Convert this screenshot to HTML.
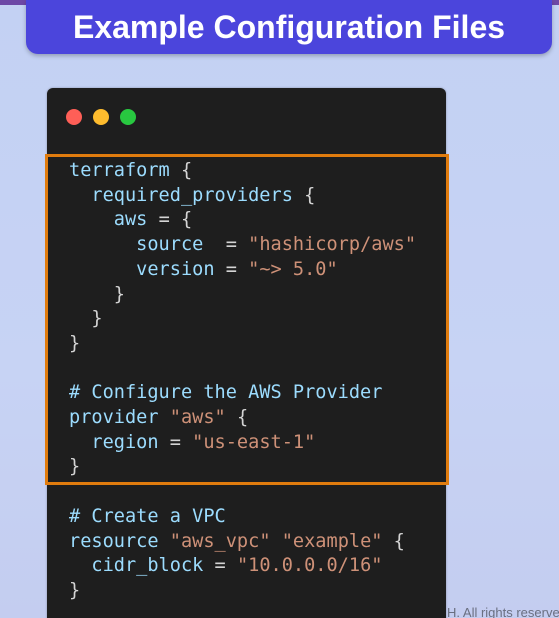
<!DOCTYPE html>
<html><head><style>
html,body{margin:0;padding:0;width:559px;height:618px;overflow:hidden;}
body{background:linear-gradient(180deg,#c3d1f3 0%,#c7d3f4 60%,#c4cdf0 100%);position:relative;font-family:"Liberation Sans",sans-serif;}
.top{position:absolute;left:0;top:0;width:559px;height:5px;background:#6d48a6;}
.title{position:absolute;left:26px;top:0;width:526px;height:54px;background:#4b45dc;border-radius:0 0 12px 12px;box-shadow:0 2px 4px rgba(0,0,0,.25);color:#fff;font-weight:bold;font-size:32px;text-align:center;line-height:54px;}
.win{position:absolute;left:47px;top:88px;width:399px;height:540px;background:#1e1e1e;border-radius:6px;box-shadow:0 0 2px rgba(0,0,0,.3);}
.dot{position:absolute;top:109px;width:16px;height:16px;border-radius:50%;}
.box{position:absolute;left:45px;top:154px;width:398px;height:325px;border:3px solid #e07c0e;}
pre{position:absolute;left:69px;top:159px;margin:0;font-family:"DejaVu Sans Mono","Liberation Mono",monospace;font-size:18.6px;line-height:24.7px;color:#d4d4d4;}
.k{color:#9cdcfe}.s{color:#ce9178}
.foot{position:absolute;left:447px;top:605px;font-size:13px;color:#6a6f80;white-space:nowrap;}
</style></head><body>
<div class="top"></div>
<div class="title">Example Configuration Files</div>
<div class="win"></div>
<div class="dot" style="left:66px;background:#fe5f57"></div>
<div class="dot" style="left:93px;background:#febc2e"></div>
<div class="dot" style="left:120px;background:#28c840"></div>
<div class="box"></div>
<pre><span class="k">terraform</span> {
  <span class="k">required_providers</span> {
    <span class="k">aws</span> = {
      <span class="k">source</span>  = <span class="s">"hashicorp/aws"</span>
      <span class="k">version</span> = <span class="s">"~&gt; 5.0"</span>
    }
  }
}

<span class="k"># Configure the AWS Provider</span>
<span class="k">provider</span> <span class="s">"aws"</span> {
  <span class="k">region</span> = <span class="s">"us-east-1"</span>
}

<span class="k"># Create a VPC</span>
<span class="k">resource</span> <span class="s">"aws_vpc"</span> <span class="s">"example"</span> {
  <span class="k">cidr_block</span> = <span class="s">"10.0.0.0/16"</span>
}</pre>
<div class="foot">H. All rights reserved</div>
</body></html>
